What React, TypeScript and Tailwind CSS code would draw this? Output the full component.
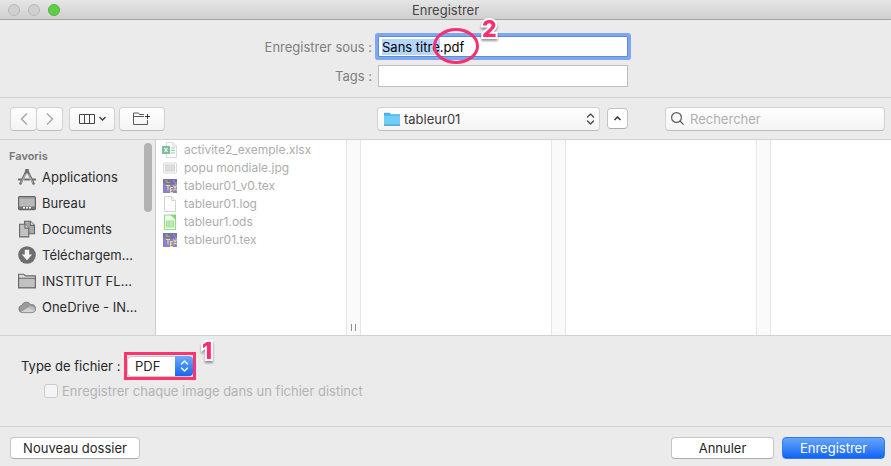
import { useEffect, useRef } from "react";
import type { ReactNode } from "react";

const raised =
  "flex h-6 items-center justify-center rounded-[4px] border border-[#d2d2d2] border-b-[#bdbdbd] bg-linear-to-b from-white to-[#f4f4f4]";

function ApplicationsIcon() {
  return (
    <svg width="18" height="18" viewBox="0 0 18 18" fill="none" stroke="#6f6f6f">
      <path d="M8.500 3 2 16.500M9.500 3 16 16.500" strokeWidth="2.400" />
      <path d="M7.500 6 3 15M10.500 6 15 15" stroke="#c4c4c4" strokeWidth="0.800" />
      <path d="M7.200 2h3.600M0 11.500h4M6.200 11.500h5.600M14 11.500h4" strokeWidth="1.800" />
    </svg>
  );
}

function DesktopIcon() {
  return (
    <svg width="18" height="18" viewBox="0 0 18 18">
      <rect x="0.600" y="2.600" width="16.800" height="13" rx="1" fill="#b9b9b9" stroke="#636363" strokeWidth="1.200" />
      <path d="M1 4h16" stroke="#8a8a8a" />
      <path d="M1 12.500h16v2.500H1z" fill="#757575" />
      <path d="M5 13h2v1.600H5zM8 13h2v1.600H8zM11 13h2v1.600h-2z" fill="#f2f2f2" />
    </svg>
  );
}

function DocumentsIcon() {
  return (
    <svg width="18" height="18" viewBox="0 0 18 18" fill="#c2c2c2" stroke="#666" strokeWidth="1.100">
      <path d="M6.500 1.200h6l4 4v8.600h-10z" fill="#a9a9a9" />
      <path d="M12.300 1.200v4.200h4.200" fill="#dedede" />
      <path d="M1.600 4.200h5.500l3.700 3.700v9H1.600z" />
      <path d="M7 4.200v3.900h3.800" fill="#e2e2e2" />
    </svg>
  );
}

function DownloadsIcon() {
  return (
    <svg width="18" height="18" viewBox="0 0 18 18">
      <circle cx="9" cy="9" r="8.800" fill="#6e6e6e" />
      <path d="M6.800 3.800h4.400v4.700h3L9 14.200 3.800 8.500h3z" fill="#f4f4f4" />
    </svg>
  );
}

function GreyFolderIcon() {
  return (
    <svg width="18" height="18" viewBox="0 0 18 18" stroke="#666" strokeWidth="1.100">
      <path d="M.600 15.800V2.200h5.200l1.600 1.700h10v11.900z" fill="#dadada" />
      <path d="M.600 6.200h16.800v9.600H.600z" fill="#c1c1c1" />
    </svg>
  );
}

function CloudIcon() {
  return (
    <svg width="18" height="18" viewBox="0 0 18 18">
      <path
        d="M4.200 14.600a3.700 3.700 0 0 1-.400-7.300 5 5 0 0 1 9-.600 4 4 0 0 1 1.400 7.900z"
        fill="#9b9b9b"
        stroke="#777"
        strokeWidth="0.900"
      />
      <path d="M3 13.800 10.500 9.600 16.500 13a3.500 3.500 0 0 1-2.300 1.200H4.200z" fill="#d4d4d4" />
      <path d="M10 9.500c2-2 6-1.500 7.200 1.500.2 1-.2 1.700-.7 2.200z" fill="#bcbcbc" />
    </svg>
  );
}

function ExcelIcon() {
  return (
    <svg width="16" height="16" viewBox="0 0 16 16">
      <path d="M4.500.5h6.500l3.500 3.500v11.500h-10z" fill="#fff" stroke="#dcdcdc" />
      <path d="M11 .5V4h3.500" fill="none" stroke="#d4d4d4" />
      <path d="M9 6h4M9 8.500h4M9 11h4" stroke="#8fc9ab" strokeWidth="1.200" />
      <rect x="0" y="4" width="8" height="8" fill="#7fbd9b" />
      <path d="m2.500 6 3 4M5.500 6l-3 4" stroke="#fff" strokeWidth="1.100" />
    </svg>
  );
}

function ImageIcon() {
  return (
    <svg width="16" height="16" viewBox="0 0 16 16">
      <rect x="1.500" y="3" width="13" height="10" rx="1" fill="#fafafa" stroke="#dadada" />
      <rect x="3.500" y="5" width="9" height="6" fill="#dedede" stroke="#cdcdcd" strokeWidth="0.800" />
    </svg>
  );
}

function TexIcon() {
  return (
    <svg width="16" height="16" viewBox="0 0 16 16">
      <rect x="1" y="1" width="14" height="14" fill="#8a80cc" />
      <path d="M1 1h14v4L9 7 1 5z" fill="#77739f" />
      <path d="M3 3h3M4 4.500h4" stroke="#9fb874" strokeWidth="1.200" />
      <path d="M11 2l3 4v5" stroke="#a692e0" fill="none" />
      <path d="M4 7.500h4M6 7.500v5M11.500 7.500l3 5M14.500 7.500l-3 5M11 9.500H8.500v5H11M8.500 12h2" stroke="#f0df86" strokeWidth="1.100" fill="none" />
    </svg>
  );
}

function BlankIcon() {
  return (
    <svg width="16" height="16" viewBox="0 0 16 16" stroke="#d4d4d4" fill="#fff">
      <path d="M2.500.5h7l4 4v11h-11z" />
      <path d="M9.500.5v4h4" fill="#f4f4f4" />
    </svg>
  );
}

function OdsIcon() {
  return (
    <svg width="16" height="16" viewBox="0 0 16 16">
      <path d="M2.500 1h7l4 4v10.500h-11z" fill="#f1fbee" stroke="#96dd88" strokeWidth="1.200" />
      <path d="M9 .500h5v5z" fill="#7fd36d" />
      <path d="M4.500 7h7v6h-7z" fill="#d5f2ce" stroke="#9fdc93" />
      <path d="M4.500 9h7M4.500 11h7M7 7v6" stroke="#9fdc93" strokeWidth="0.800" />
    </svg>
  );
}

function BlueFolderIcon() {
  return (
    <svg width="16" height="14" viewBox="0 0 16 14">
      <path d="M0 13.500V.8h5.500L7 2.200h9v11.300z" fill="#49b1e2" />
      <path d="M0 3.600h16v9.200H0z" fill="#6fcdf8" />
      <path d="M0 13.200h16" stroke="#4797c0" />
    </svg>
  );
}

function UpDown({ className = "" }: { className?: string }) {
  return (
    <svg width="9" height="12" viewBox="0 0 9 12" fill="none" stroke="currentColor" strokeWidth="1.400" strokeLinecap="round" strokeLinejoin="round" className={className}>
      <path d="M1.500 4 4.500 1l3 3M1.500 8l3 3 3-3" />
    </svg>
  );
}

const favourites: { label: string; icon: ReactNode }[] = [
  { label: "Applications", icon: <ApplicationsIcon /> },
  { label: "Bureau", icon: <DesktopIcon /> },
  { label: "Documents", icon: <DocumentsIcon /> },
  { label: "Téléchargem...", icon: <DownloadsIcon /> },
  { label: "INSTITUT FL...", icon: <GreyFolderIcon /> },
  { label: "OneDrive - IN...", icon: <CloudIcon /> },
];

const files: { name: string; icon: ReactNode }[] = [
  { name: "activite2_exemple.xlsx", icon: <ExcelIcon /> },
  { name: "popu mondiale.jpg", icon: <ImageIcon /> },
  { name: "tableur01_v0.tex", icon: <TexIcon /> },
  { name: "tableur01.log", icon: <BlankIcon /> },
  { name: "tableur1.ods", icon: <OdsIcon /> },
  { name: "tableur01.tex", icon: <TexIcon /> },
];

function Marker({ children, className }: { children: ReactNode; className: string }) {
  return (
    <span
      className={`pointer-events-none absolute text-[23px] leading-6 font-extrabold text-[#ff2d6e] [-webkit-text-stroke:4px_white] [paint-order:stroke_fill] drop-shadow-[0_2px_1px_rgba(0,0,0,0.4)] ${className}`}
    >
      {children}
    </span>
  );
}

function Gutter({ grip = false }: { grip?: boolean }) {
  return (
    <div className="flex w-[15px] flex-none items-end justify-center border-x border-[#e6e6e6] bg-[#fafafa] pb-1">
      {grip && <span className="h-[7px] w-[5px] border-x border-[#8f8f8f]" />}
    </div>
  );
}

function TitleBar() {
  return (
    <header className="grid h-5 grid-cols-[1fr_auto_1fr] items-center border-b border-[#a6a6a6] bg-linear-to-b from-[#e6e6e6] to-[#cfcfcf] px-2">
      <div className="flex gap-2">
        <button aria-label="Fermer" className="size-3 rounded-full border border-[#b9b9b9] bg-[#d0d0d0]" />
        <button aria-label="Réduire" className="size-3 rounded-full border border-[#b9b9b9] bg-[#d0d0d0]" />
        <button aria-label="Agrandir" className="size-3 rounded-full border border-[#4fb53a] bg-[#5fce45]" />
      </div>
      <h1 className="text-[#454545]">Enregistrer</h1>
    </header>
  );
}

function NameForm() {
  const nameRef = useRef<HTMLInputElement>(null);
  useEffect(() => {
    nameRef.current?.focus();
    nameRef.current?.setSelectionRange(0, "Sans titre".length);
  }, []);
  return (
    <section className="flex flex-col items-center gap-2 border-b border-[#d2d2d2] pt-4 pb-[10px] text-[#7f7f7f]">
      <div className="flex items-center gap-[6px]">
        <label htmlFor="name" className="flex w-[109px] justify-end whitespace-nowrap">
          Enregistrer sous :
        </label>
        <div className="relative flex">
          <input
            id="name"
            ref={nameRef}
            defaultValue="Sans titre.pdf"
            className="h-[21px] w-[250px] rounded-[1px] border border-[#5c8ade] bg-white px-[3px] text-black ring-3 ring-[#7fa6f0] outline-none selection:bg-[#b3d7ff] selection:text-black"
          />
          <span className="pointer-events-none absolute -top-2 left-[55px] h-[36px] w-[46px] rounded-[50%] border-3 border-[#f5316f]" />
          <Marker className="-top-[19px] left-[104px]">2</Marker>
        </div>
      </div>
      <div className="flex items-center gap-[6px]">
        <label htmlFor="tags" className="flex w-[109px] justify-end whitespace-nowrap">
          Tags :
        </label>
        <input id="tags" className="h-[22px] w-[250px] border border-[#bdbdbd] bg-white px-[3px] text-black outline-none" />
      </div>
    </section>
  );
}

function Toolbar() {
  return (
    <nav className="flex h-[42px] items-center border-b border-[#d2d2d2] pr-[6px] pl-[10px]">
      <div className="flex flex-1">
        <button aria-label="Précédent" className={`${raised} w-[27px] text-[#a9a9a9]`}>
          <svg width="8" height="12" viewBox="0 0 8 12" fill="none" stroke="currentColor" strokeWidth="1.500">
            <path d="M7 .500 1.500 6 7 11.500" />
          </svg>
        </button>
        <button aria-label="Suivant" className={`${raised} -ml-px w-[27px] text-[#a9a9a9]`}>
          <svg width="8" height="12" viewBox="0 0 8 12" fill="none" stroke="currentColor" strokeWidth="1.500">
            <path d="M1 .500 6.500 6 1 11.500" />
          </svg>
        </button>
        <button aria-label="Présentation" className={`${raised} ml-[6px] w-[46px] gap-1 text-[#454545]`}>
          <svg width="16" height="10" viewBox="0 0 16 10" fill="none" stroke="currentColor">
            <path d="M.500.500h15v9H.500zM5.500.500v9M10.500.500v9" />
          </svg>
          <svg width="7" height="5" viewBox="0 0 7 5" fill="none" stroke="currentColor" strokeWidth="1.500">
            <path d="m.500 1 3 3 3-3" />
          </svg>
        </button>
        <button aria-label="Nouveau groupe" className={`${raised} ml-1 w-[46px] text-[#5a5a5a]`}>
          <svg width="18" height="14" viewBox="0 0 18 14" fill="none" stroke="currentColor">
            <path d="M11 2.500H6.500l-1-1.500H.500v11.500h14V8M.500 4.500H11" />
            <path d="M14.500 2v5M12 4.500h5" stroke="#333" />
          </svg>
        </button>
      </div>
      <div className="flex items-center gap-[7px]">
        <div className="relative flex w-[223px]">
          <span className="pointer-events-none absolute top-[5px] left-[7px]">
            <BlueFolderIcon />
          </span>
          <select
            aria-label="Emplacement"
            className="h-6 w-full appearance-none rounded-[4px] border border-[#d2d2d2] border-b-[#bdbdbd] bg-linear-to-b from-white to-[#f4f4f4] pl-[26px] text-[#3c3c3c]"
          >
            <option>tableur01</option>
          </select>
          <UpDown className="pointer-events-none absolute top-[6px] right-[5px] text-[#4a4a4a]" />
        </div>
        <button
          aria-label="Réduire la fenêtre"
          className="flex size-[21px] items-center justify-center rounded-[4px] border border-[#c4c4c4] border-b-[#adadad] bg-white text-[#333]"
        >
          <svg width="7" height="5" viewBox="0 0 7 5" fill="none" stroke="currentColor" strokeWidth="1.500">
            <path d="m.500 4 3-3 3 3" />
          </svg>
        </button>
      </div>
      <label className={`${raised} ml-[37px] w-[220px] gap-[6px] pl-[5px]`}>
        <svg width="13" height="13" viewBox="0 0 13 13" fill="none" stroke="#5c5c5c" strokeWidth="1.200" className="flex-none">
          <circle cx="5.500" cy="5.500" r="4.900" />
          <path d="m9 9 3.600 3.600" />
        </svg>
        <input
          type="search"
          aria-label="Rechercher"
          placeholder="Rechercher"
          className="w-full min-w-0 bg-transparent outline-none placeholder:text-[#b0b0b0]"
        />
      </label>
    </nav>
  );
}

function Browser() {
  return (
    <main className="flex h-[196px] overflow-hidden border-b border-[#d2d2d2] bg-white">
      <aside className="flex w-[156px] flex-none justify-between border-r border-[#cfcfcf] bg-[#ebebeb] pr-[3px]">
        <div className="pt-2">
          <h2 className="pl-[9px] text-[11px] leading-4 font-semibold text-[#767676]">Favoris</h2>
          <ul>
            {favourites.map((f) => (
              <li key={f.label}>
                <a href="#" className="flex h-[26px] items-center gap-[6px] pl-[18px] whitespace-nowrap text-[#2b2b2b]">
                  {f.icon}
                  {f.label}
                </a>
              </li>
            ))}
          </ul>
        </div>
        <div className="mt-[3px] h-[69px] w-2 flex-none rounded-full bg-[#b3b3b3]" />
      </aside>
      <ul className="w-[190px] flex-none pt-px text-[12px] text-[#adadad]">
        {files.map((f) => (
          <li key={f.name} className="flex h-[18px] items-center gap-[6px] pl-[6px] whitespace-nowrap">
            {f.icon}
            {f.name}
          </li>
        ))}
      </ul>
      <Gutter grip />
      <div className="w-[190px] flex-none" />
      <Gutter />
      <div className="w-[190px] flex-none" />
      <Gutter />
      <div className="flex-1" />
    </main>
  );
}

function Options() {
  return (
    <section className="flex h-[91px] flex-col gap-1 border-b border-[#d2d2d2] pt-4 text-[#262626]">
      <div className="flex items-center pl-[21px]">
        <label htmlFor="type" className="w-[103px] whitespace-nowrap">
          Type de fichier :
        </label>
        <div className="relative flex h-7 w-[72px] items-center border-3 border-[#fb3470]">
          <select
            id="type"
            className="h-[21px] flex-1 appearance-none rounded-[4px] border border-[#c9c9c9] bg-white pl-[7px]"
          >
            <option>PDF</option>
          </select>
          <span className="pointer-events-none absolute top-px right-0 flex h-5 w-[18px] items-center justify-center rounded-r-[4px] bg-linear-to-b from-[#6aa9fb] to-[#0f66f5] text-white">
            <UpDown />
          </span>
          <Marker className="-top-4 left-[75px]">1</Marker>
        </div>
      </div>
      <label className="flex items-center gap-1 pl-11 leading-[14px] text-[#b3b3b3]">
        <input
          type="checkbox"
          disabled
          className="size-[14px] appearance-none rounded-[3px] border border-[#cbcbcb] bg-[#f4f4f4]"
        />
        Enregistrer chaque image dans un fichier distinct
      </label>
    </section>
  );
}

function Footer() {
  const plain = "h-[22px] rounded-[4px] border border-[#c6c6c6] border-b-[#adadad] bg-white text-[#262626]";
  return (
    <footer className="flex gap-2 pt-[10px] pr-[6px] pb-2 pl-[10px]">
      <button className={`${plain} mr-auto w-[130px]`}>Nouveau dossier</button>
      <button className={`${plain} w-[103px]`}>Annuler</button>
      <button className="h-[22px] w-[103px] rounded-[4px] border border-[#2f7bf2] bg-linear-to-b from-[#64a4fa] to-[#0b63f6] text-white">
        Enregistrer
      </button>
    </footer>
  );
}

export default function App() {
  return (
    <div className="min-h-screen bg-[#ebebeb] font-['Inter','Liberation_Sans',sans-serif] text-[13px] leading-4">
      <TitleBar />
      <NameForm />
      <Toolbar />
      <Browser />
      <Options />
      <Footer />
    </div>
  );
}
